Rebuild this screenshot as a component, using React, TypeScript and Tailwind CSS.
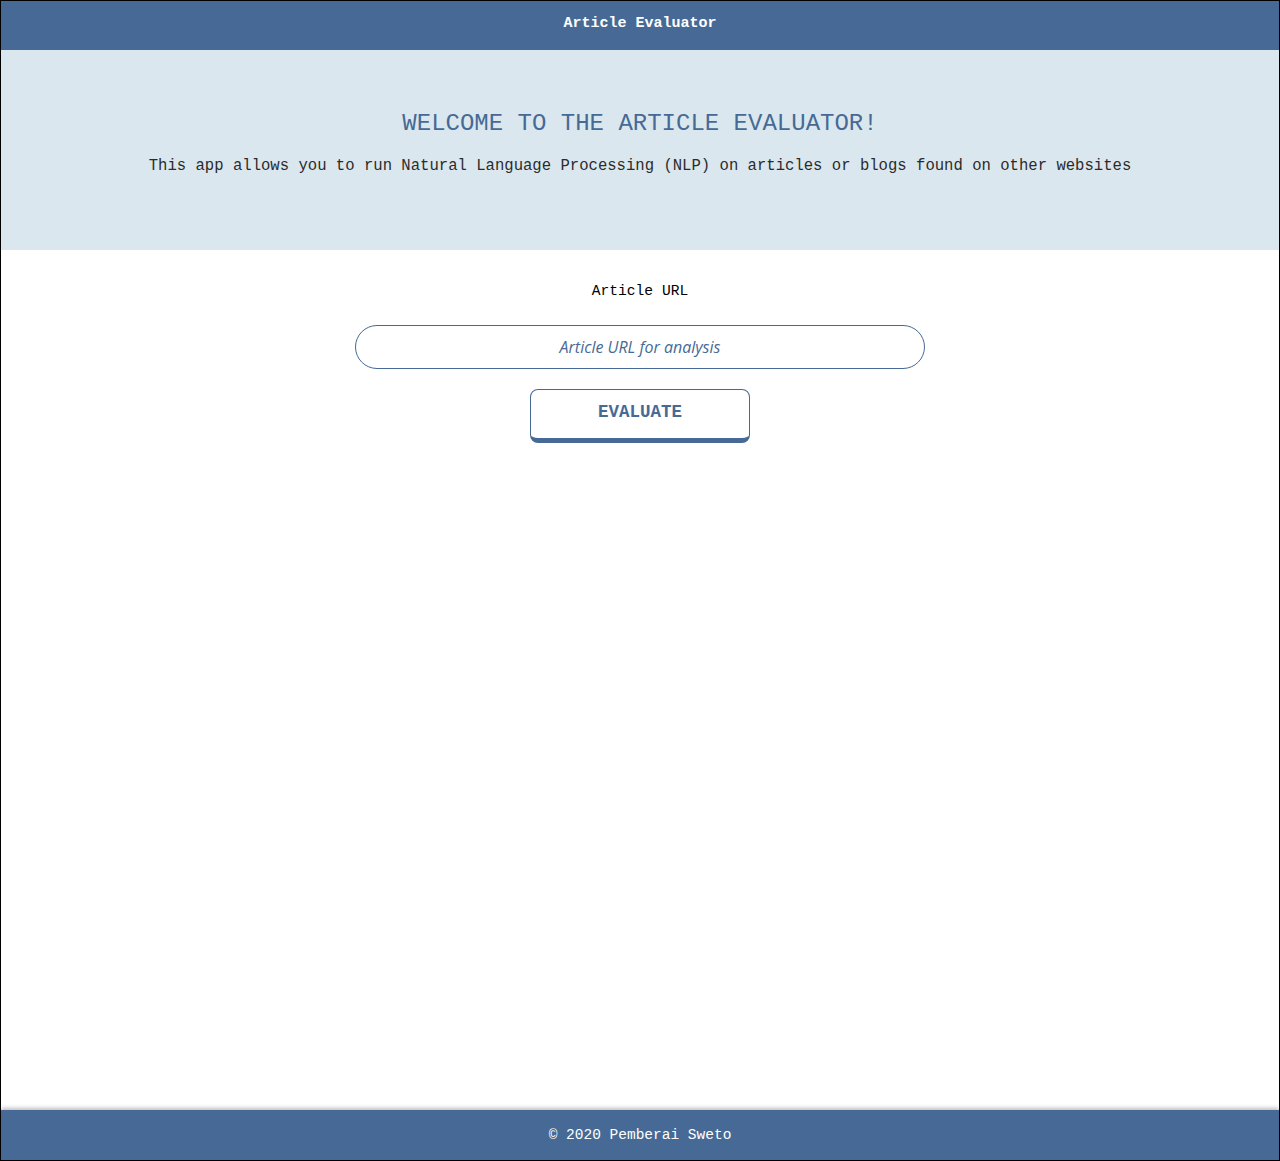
import React, { useState } from "react";

const mono = "font-['Liberation_Mono','DejaVu_Sans_Mono',monospace]";

export default function App() {
  const [url, setUrl] = useState("");

  return (
    <div className={`flex min-h-screen flex-col border border-black bg-white ${mono}`}>
      <header className="flex h-[49px] justify-center bg-[#466a95] pt-[13px]">
        <h1 className="text-[15px] font-bold leading-5 text-white">Article Evaluator</h1>
      </header>

      <section className="flex h-[200px] flex-col items-center bg-[#dbe7ee] pt-[59px]">
        <h2 className="text-[24px] leading-[30px] text-[#466a95]">
          WELCOME TO THE ARTICLE EVALUATOR!
        </h2>
        <p className="mt-[17px] text-[15.6px] leading-5 text-[#2b2b2b]">
          This app allows you to run Natural Language Processing (NLP) on articles or blogs found on other websites
        </p>
      </section>

      <main className="flex flex-1 flex-col items-center pt-[31px]">
        <form
          className="flex flex-col items-center"
          onSubmit={(e) => {
            e.preventDefault();
          }}
        >
          <label htmlFor="url" className="text-[14.6px] leading-5 text-black">
            Article URL
          </label>
          <input
            id="url"
            type="text"
            value={url}
            onChange={(e) => setUrl(e.target.value)}
            placeholder="Article URL for analysis"
            className="mt-[24px] h-[44px] w-[570px] rounded-full border border-[#466a95] bg-white text-center font-['Open_Sans','Noto_Sans',sans-serif] text-[16px] italic text-[#466a95] outline-none placeholder:text-[#466a95]"
          />
          <button
            type="submit"
            className={`mt-[20px] h-[54px] w-[220px] rounded-[8px] border border-b-[5px] border-[#466a95] bg-white pb-[4px] text-[17.5px] font-bold text-[#466a95] ${mono}`}
          >
            EVALUATE
          </button>
        </form>
      </main>

      <footer className="flex h-[50px] items-center justify-center bg-[#466a95] shadow-[0_-2px_4px_rgba(0,0,0,0.25)]">
        <p className="text-[14.5px] leading-5 text-white">© 2020 Pemberai Sweto</p>
      </footer>
    </div>
  );
}
